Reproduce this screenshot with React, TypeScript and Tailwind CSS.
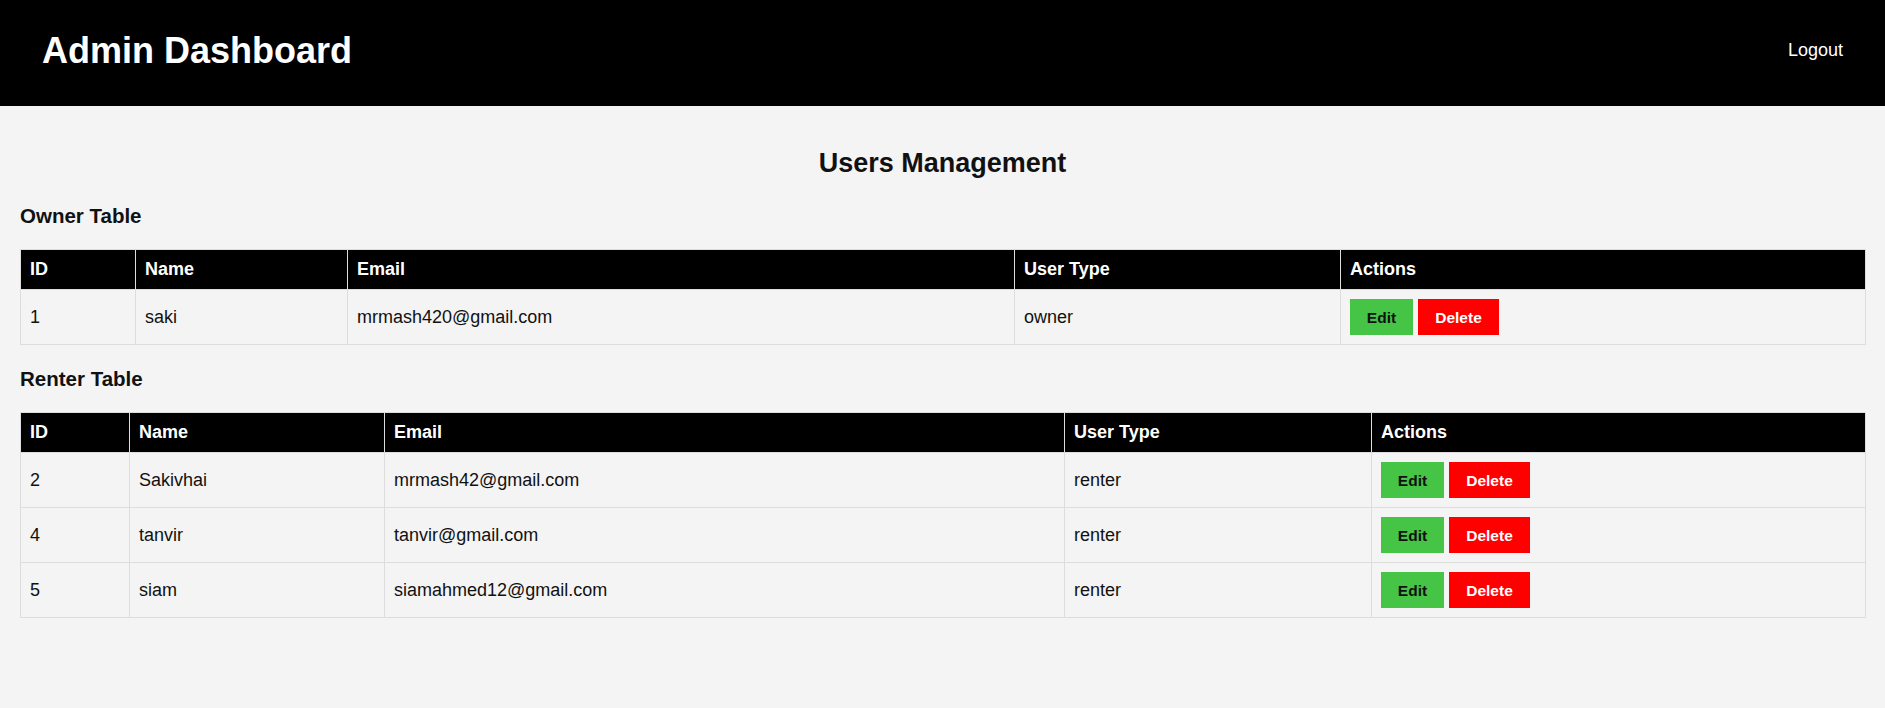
import React from 'react';

type User = { id: number; name: string; email: string; type: string };

const owners: User[] = [{ id: 1, name: 'saki', email: 'mrmash420@gmail.com', type: 'owner' }];
const renters: User[] = [
  { id: 2, name: 'Sakivhai', email: 'mrmash42@gmail.com', type: 'renter' },
  { id: 4, name: 'tanvir', email: 'tanvir@gmail.com', type: 'renter' },
  { id: 5, name: 'siam', email: 'siamahmed12@gmail.com', type: 'renter' },
];

const headers = ['ID', 'Name', 'Email', 'User Type', 'Actions'];

function UserTable({ rows, widths }: { rows: User[]; widths: number[] }) {
  return (
    <table className="w-full table-fixed border-collapse text-left">
      <colgroup>
        {widths.map((w, i) => (
          <col key={i} style={{ width: w }} />
        ))}
      </colgroup>
      <thead>
        <tr className="bg-black text-white">
          {headers.map((h) => (
            <th key={h} className="border border-[#ddd] px-[9px] py-[9px] text-[18px] leading-[21px] font-bold">
              {h}
            </th>
          ))}
        </tr>
      </thead>
      <tbody>
        {rows.map((u) => (
          <tr key={u.id}>
            <td className="border border-[#ddd] px-[9px] py-[9px] align-middle">{u.id}</td>
            <td className="border border-[#ddd] px-[9px] py-[9px] align-middle">{u.name}</td>
            <td className="border border-[#ddd] px-[9px] py-[9px] align-middle">{u.email}</td>
            <td className="border border-[#ddd] px-[9px] py-[9px] align-middle">{u.type}</td>
            <td className="border border-[#ddd] px-[9px] py-[9px] align-middle">
              <div className="flex gap-[5px]">
                <button className="h-[36px] w-[63px] bg-[#45c445] text-[15.5px] font-bold text-[#111]">Edit</button>
                <button className="h-[36px] w-[81px] bg-[#ff0000] text-[15.5px] font-bold text-white">Delete</button>
              </div>
            </td>
          </tr>
        ))}
      </tbody>
    </table>
  );
}

export default function App() {
  return (
    <div className="min-h-screen bg-[#f4f4f4] font-['Liberation_Sans',Arial,sans-serif] text-[18px] leading-[21px] text-[#111]">
      <header className="flex h-[106px] justify-between bg-black px-[42px] text-white">
        <h1 className="mt-[30px] text-[36px] leading-[41px] font-bold">Admin Dashboard</h1>
        <a href="#" className="mt-[40px] text-[18px] leading-[21px]">Logout</a>
      </header>
      <main className="px-[20px]">
        <h2 className="mt-[42px] text-center text-[27px] leading-[31px] font-bold">Users Management</h2>
        <h3 className="mt-[25px] text-[20.5px] leading-[24px] font-bold">Owner Table</h3>
        <div className="mt-[21px]">
          <UserTable rows={owners} widths={[115, 212, 667, 326, 525]} />
        </div>
        <h3 className="mt-[22px] text-[20.5px] leading-[24px] font-bold">Renter Table</h3>
        <div className="mt-[21px]">
          <UserTable rows={renters} widths={[109, 255, 680, 307, 494]} />
        </div>
      </main>
    </div>
  );
}
